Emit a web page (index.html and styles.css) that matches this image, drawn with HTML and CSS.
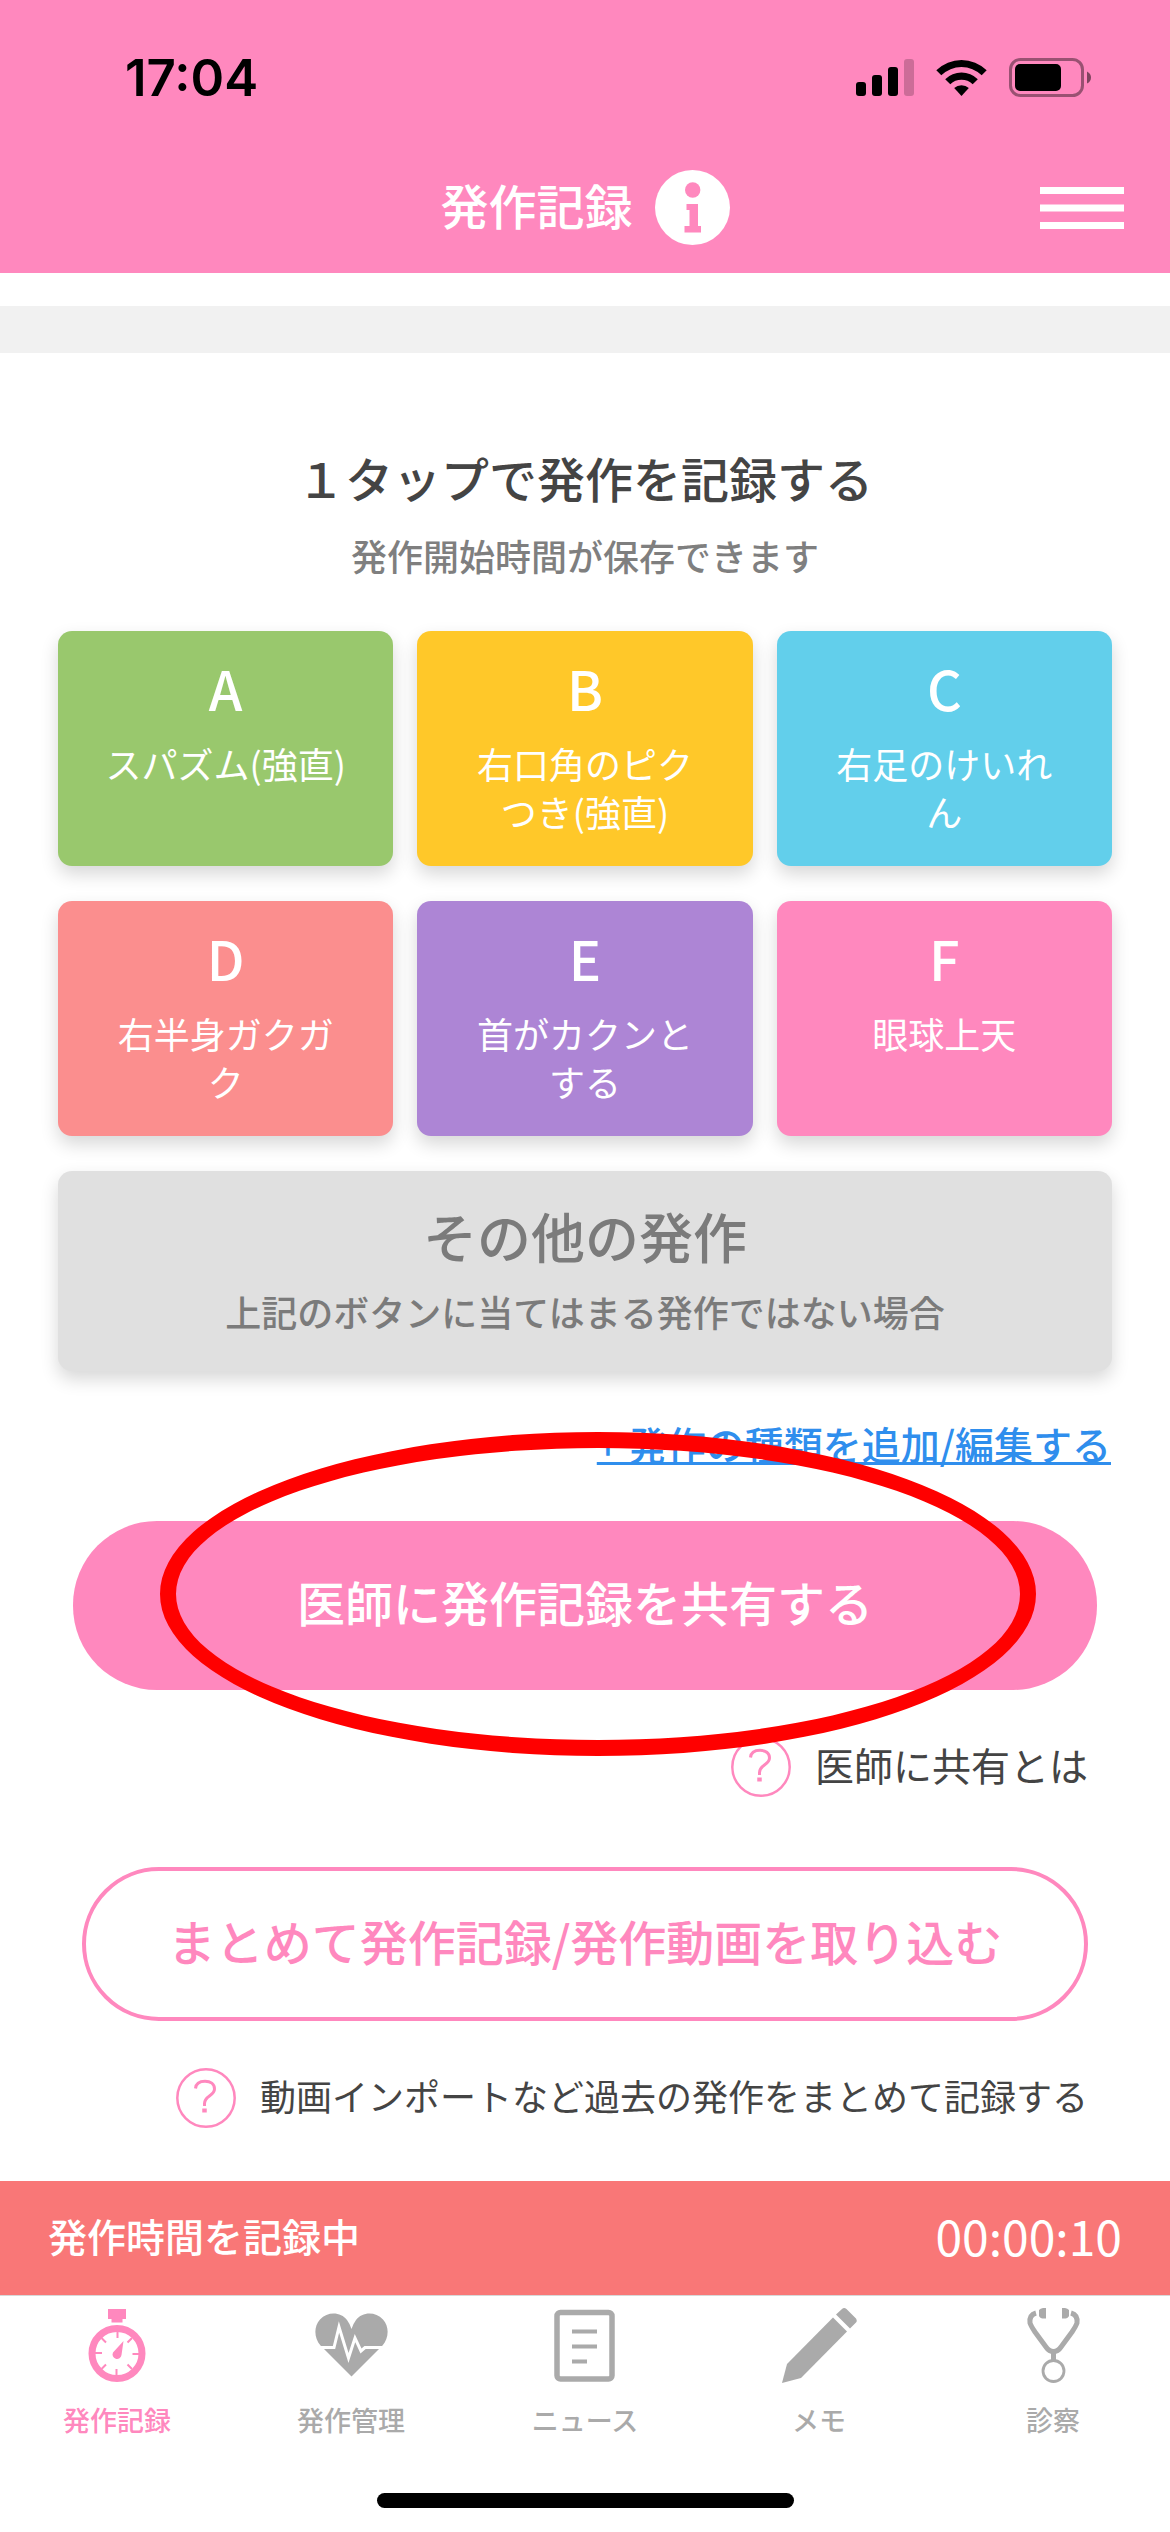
FILE: index.html
```html
<!DOCTYPE html>
<html lang="ja">
<head>
<meta charset="utf-8">
<meta name="viewport" content="width=device-width, initial-scale=1">
<title>発作記録</title>
<link rel="stylesheet" href="styles.css">
</head>
<body>
<header class="top">
  <div class="status">
    <span class="clock">17:04</span>
    <div class="status-icons">
      <svg width="58" height="40" viewBox="0 0 58 40" aria-hidden="true">
        <rect x="0" y="24" width="10" height="14" rx="3"/>
        <rect x="16" y="17" width="10" height="21" rx="3"/>
        <rect x="32" y="9" width="10" height="29" rx="3"/>
        <rect x="48" y="1" width="10" height="37" rx="3" opacity=".2"/>
      </svg>
      <svg width="51" height="40" viewBox="0 0 51 40" aria-hidden="true">
        <path d="M0.3 12.3A36 36 0 0 1 50.7 12.3L45.7 17.2A29 29 0 0 0 5.3 17.2Z"/>
        <path d="M9.2 21.2A23.4 23.4 0 0 1 41.8 21.2L36.7 26.2A16.2 16.2 0 0 0 14.3 26.2Z"/>
        <path d="M18.2 30A11 11 0 0 1 32.8 30L25.5 38Z"/>
      </svg>
      <svg width="82" height="40" viewBox="0 0 82 40" aria-hidden="true">
        <rect x="1.500" y="1.500" width="72" height="36" rx="10" fill="none" stroke="#000" stroke-width="3" opacity=".4"/>
        <rect x="6" y="6" width="46" height="27" rx="5"/>
        <path d="M78 13.500Q82 15.500 82 19.500T78 25.500Z" opacity=".5"/>
      </svg>
    </div>
  </div>
  <div class="title-bar">
    <h1 class="page-title">発作記録</h1>
    <button class="info" type="button" aria-label="情報">
      <svg width="75" height="75" viewBox="0 0 75 75" aria-hidden="true">
        <circle cx="37.500" cy="37.500" r="37.500" fill="#fff"/>
        <circle cx="37.700" cy="20" r="7.700" fill="#ff88be"/>
        <path d="M31.500 34h11.500v22h3v6.500H29.500V56h5V40h-3z" fill="#ff88be"/>
      </svg>
    </button>
    <button class="menu" type="button" aria-label="メニュー">
      <svg width="84" height="42" viewBox="0 0 84 42" aria-hidden="true">
        <path d="M0 0h84v7H0zM0 17.500h84v7H0zM0 35h84v7H0z" fill="#fff"/>
      </svg>
    </button>
  </div>
</header>

<main class="content">
  <div class="band"></div>

  <section class="record">
    <h2 class="heading">１タップで発作を記録する</h2>
    <p class="lead">発作開始時間が保存できます</p>

    <div class="types">
      <button class="type green" type="button"><span class="letter">A</span><span class="name">スパズム(強直)</span></button>
      <button class="type yellow" type="button"><span class="letter">B</span><span class="name">右口角のピクつき(強直)</span></button>
      <button class="type blue" type="button"><span class="letter">C</span><span class="name">右足のけいれん</span></button>
      <button class="type salmon" type="button"><span class="letter">D</span><span class="name">右半身ガクガク</span></button>
      <button class="type purple" type="button"><span class="letter">E</span><span class="name">首がカクンとする</span></button>
      <button class="type pink" type="button"><span class="letter">F</span><span class="name">眼球上天</span></button>
      <button class="type other" type="button"><span class="other-title">その他の発作</span><span class="other-note">上記のボタンに当てはまる発作ではない場合</span></button>
    </div>

    <a class="edit-link" href="#types">+ 発作の種類を追加/編集する</a>
  </section>

  <section class="actions">
    <div class="share-wrap">
      <button class="share" type="button">医師に発作記録を共有する</button>
      <span class="ring"></span>
    </div>
    <a class="help" href="#share-help">
      <svg class="question" width="60" height="60" viewBox="0 0 60 60" aria-hidden="true">
        <circle cx="30" cy="30" r="28.700"/>
        <path d="M19.500 20.500C20 15.500 24 13.300 29 13.300C34.500 13.300 38.500 16 38.500 21C38.500 28 28.500 27.500 28.500 35.500V38" stroke-width="3"/>
        <path d="M28.500 40.500v4" stroke-width="4.500"/>
      </svg>
      <span class="help-text">医師に共有とは</span>
    </a>
    <button class="import" type="button">まとめて発作記録/発作動画を取り込む</button>
    <a class="help small" href="#import-help">
      <svg class="question" width="60" height="60" viewBox="0 0 60 60" aria-hidden="true">
        <circle cx="30" cy="30" r="28.700"/>
        <path d="M19.500 20.500C20 15.500 24 13.300 29 13.300C34.500 13.300 38.500 16 38.500 21C38.500 28 28.500 27.500 28.500 35.500V38" stroke-width="3"/>
        <path d="M28.500 40.500v4" stroke-width="4.500"/>
      </svg>
      <span class="help-text">動画インポートなど過去の発作をまとめて記録する</span>
    </a>
  </section>
</main>

<footer class="bottom">
  <div class="recording"><span>発作時間を記録中</span><time class="timer">00:00:10</time></div>
  <nav class="tabs">
    <a class="tab active" href="#record" aria-current="page">
      <svg width="76" height="76" viewBox="0 0 76 76" aria-hidden="true">
        <path d="M29 1h18v10h-3.500v3.500h-11V11H29z" fill="currentColor"/>
        <circle cx="38" cy="45.500" r="25" fill="none" stroke="currentColor" stroke-width="7"/>
        <path d="M38.500 23v7M37.500 61v7M16 45h7M53.500 46h7M22.500 30l4.500 4.500M53 30l-4.500 4.500M22.500 61l4.500-4.500M53 61l-4.500-4.500" fill="none" stroke="currentColor" stroke-width="2"/>
        <path d="M44.500 33L42.500 47A4.500 4.500 0 1 1 34 44.500Z" fill="currentColor"/>
      </svg>
      発作記録
    </a>
    <a class="tab" href="#manage">
      <svg width="76" height="76" viewBox="0 0 76 76" aria-hidden="true">
        <path d="M38.500 68.500L7.500 37.500C1 30 .5 18.500 7 11.500C15 3 28 4 34 12Q37 16 38.500 21Q40 16 43 12C49 4 62 3 70 11.500C76.500 18.500 76 30 69.500 37.500Z" fill="currentColor"/>
        <path d="M8 39.500h13L26 19L35.500 50L42 30L48 43L52 39.500H70" fill="none" stroke="#fff" stroke-width="3"/>
      </svg>
      発作管理
    </a>
    <a class="tab" href="#news">
      <svg width="76" height="76" viewBox="0 0 76 76" aria-hidden="true">
        <rect x="10" y="4.500" width="55" height="66.500" rx="3.500" fill="none" stroke="currentColor" stroke-width="5.500"/>
        <path d="M25 23.500h25M25 38.500h25M25 53.500h15" fill="none" stroke="currentColor" stroke-width="4"/>
      </svg>
      ニュース
    </a>
    <a class="tab" href="#memo">
      <svg width="76" height="76" viewBox="0 0 76 76" aria-hidden="true">
        <path d="M52 9.500L66 23.500L20 70L1 75L6 56Z" fill="currentColor"/>
        <path d="M55 6.500L61 1Q63-1 65.500 1L75 10.500Q76.500 13 75 14.500L69 20.500Z" fill="currentColor"/>
      </svg>
      メモ
    </a>
    <a class="tab" href="#exam">
      <svg width="76" height="76" viewBox="0 0 76 76" aria-hidden="true">
        <path d="M21 5Q14 7 15 15Q16 18 20 24L31 39Q34 43.500 38.500 43.500T46 39L57 24Q61 18 62 15Q63 7 56 5" fill="none" stroke="currentColor" stroke-width="5"/>
        <path d="M38.500 43v10" stroke="currentColor" stroke-width="5"/>
        <circle cx="38.500" cy="63" r="10.500" fill="none" stroke="currentColor" stroke-width="2.800"/>
        <path d="M31 0v10.500Q25 11 24 8V2Q26-.5 31 0zM47 0v10.500Q53 11 54 8V2Q52-.5 47 0z" fill="currentColor"/>
      </svg>
      診察
    </a>
  </nav>
  <div class="home-bar"></div>
</footer>
</body>
</html>
```
FILE: styles.css
```css
* {
  box-sizing: border-box;
}

body {
  margin: 0;
  min-height: 100vh;
  display: flex;
  flex-direction: column;
  background: #fff;
  color: #444;
  font-family: "Noto Sans CJK JP", sans-serif;
  font-weight: 500;
}

h1,
h2,
p {
  margin: 0;
  font-weight: 500;
}

button {
  margin: 0;
  padding: 0;
  border: 0;
  background: none;
  color: inherit;
  font: inherit;
  cursor: pointer;
}

a {
  color: inherit;
  text-decoration: none;
}

svg {
  display: block;
}

/* Status bar and title */
.top {
  background: #ff88be;
}

.status {
  display: flex;
  justify-content: space-between;
  align-items: center;
  padding: 48px 79px 34px 125px;
  color: #000;
}

.clock {
  font-family: Inter, sans-serif;
  font-size: 51px;
  font-weight: 600;
  line-height: 60px;
}

.status-icons {
  display: flex;
  gap: 22px;
}

.title-bar {
  display: grid;
  grid-template-columns: 1fr auto auto 1fr;
  align-items: center;
  padding: 28px 46px;
}

.page-title {
  grid-column: 2;
  padding-bottom: 8px;
  color: #fff;
  font-size: 48px;
  line-height: 64px;
}

.info {
  margin-left: 22px;
}

.menu {
  justify-self: end;
}

/* Seizure type buttons */
.content {
  flex: 1;
  padding-top: 33px;
}

.band {
  height: 47px;
  background: #f1f1f1;
}

.record {
  display: flex;
  flex-direction: column;
  align-items: center;
  padding: 88px 58px 0;
}

.heading {
  font-size: 48px;
  line-height: 72px;
}

.lead {
  margin-top: 18px;
  color: #7f7f7f;
  font-size: 36px;
  line-height: 48px;
}

.types {
  align-self: stretch;
  display: grid;
  grid-template-columns: repeat(3, 1fr);
  gap: 35px 24px;
  margin-top: 52px;
}

.type {
  display: flex;
  flex-direction: column;
  align-items: center;
  gap: 15px;
  padding: 21px 43px 31px;
  border-radius: 14px;
  box-shadow: 0 8px 18px rgba(0, 0, 0, 0.16);
  color: #fff;
}

.letter {
  font-size: 54px;
  line-height: 72px;
}

.name {
  font-size: 36px;
  font-weight: 400;
  line-height: 48px;
}

.green { background: #99c86d; }
.yellow { background: #ffc829; }
.blue { background: #62cfeb; }
.salmon { background: #fb8e8e; }
.purple { background: #ad85d5; }
.pink { background: #ff88be; }

.other {
  grid-column: 1 / -1;
  padding: 29px 43px 36px;
  background: #e0e0e0;
  color: #7b7b7b;
}

.other-title {
  font-size: 54px;
  line-height: 72px;
}

.other-note {
  font-size: 36px;
  line-height: 48px;
}

.edit-link {
  align-self: flex-end;
  margin: 44px 1px 0;
  color: #2f8eed;
  font-size: 39px;
  line-height: 56px;
  text-decoration: underline;
}

/* Share and import */
.actions {
  display: flex;
  flex-direction: column;
  padding: 50px 82px 0;
}

.share-wrap {
  position: relative;
  margin: 0 -9px;
}

.share {
  width: 100%;
  padding: 44px 40px 53px;
  border-radius: 84px;
  background: #ff88be;
  color: #fff;
  font-size: 48px;
  line-height: 72px;
}

.ring {
  position: absolute;
  inset: -89px 61px -66px 87px;
  border: 16px solid #f00;
  border-radius: 50%;
  pointer-events: none;
}

.help {
  align-self: flex-end;
  display: flex;
  align-items: center;
  gap: 24px;
  margin-top: 47px;
  font-size: 39px;
  font-weight: 400;
  line-height: 54px;
}

.help-text {
  padding-bottom: 6px;
}

.help.small {
  font-size: 36px;
}

.question {
  fill: none;
  stroke: #ff88be;
  stroke-width: 2.5;
}

.import {
  margin-top: 70px;
  padding: 33px 40px 41px;
  border: 4px solid #ff88be;
  border-radius: 77px;
  color: #ff88be;
  font-size: 48px;
  line-height: 72px;
}

/* Recording banner and tabs */
.recording {
  display: flex;
  justify-content: space-between;
  align-items: center;
  padding: 18px 48px 24px;
  background: #f97777;
  color: #fff;
  font-size: 39px;
  line-height: 72px;
}

.timer {
  font-size: 48px;
  font-weight: 400;
}

.tabs {
  display: grid;
  grid-template-columns: repeat(5, 1fr);
  padding-top: 12px;
  border-top: 1px solid #d8d8d8;
}

.tab {
  display: flex;
  flex-direction: column;
  align-items: center;
  gap: 18px;
  color: #aaa;
  font-size: 27px;
  line-height: 36px;
}

.tab.active {
  color: #ff88be;
}

.home-bar {
  width: 417px;
  height: 15px;
  margin: 55px auto 24px;
  border-radius: 8px;
  background: #000;
}
```
